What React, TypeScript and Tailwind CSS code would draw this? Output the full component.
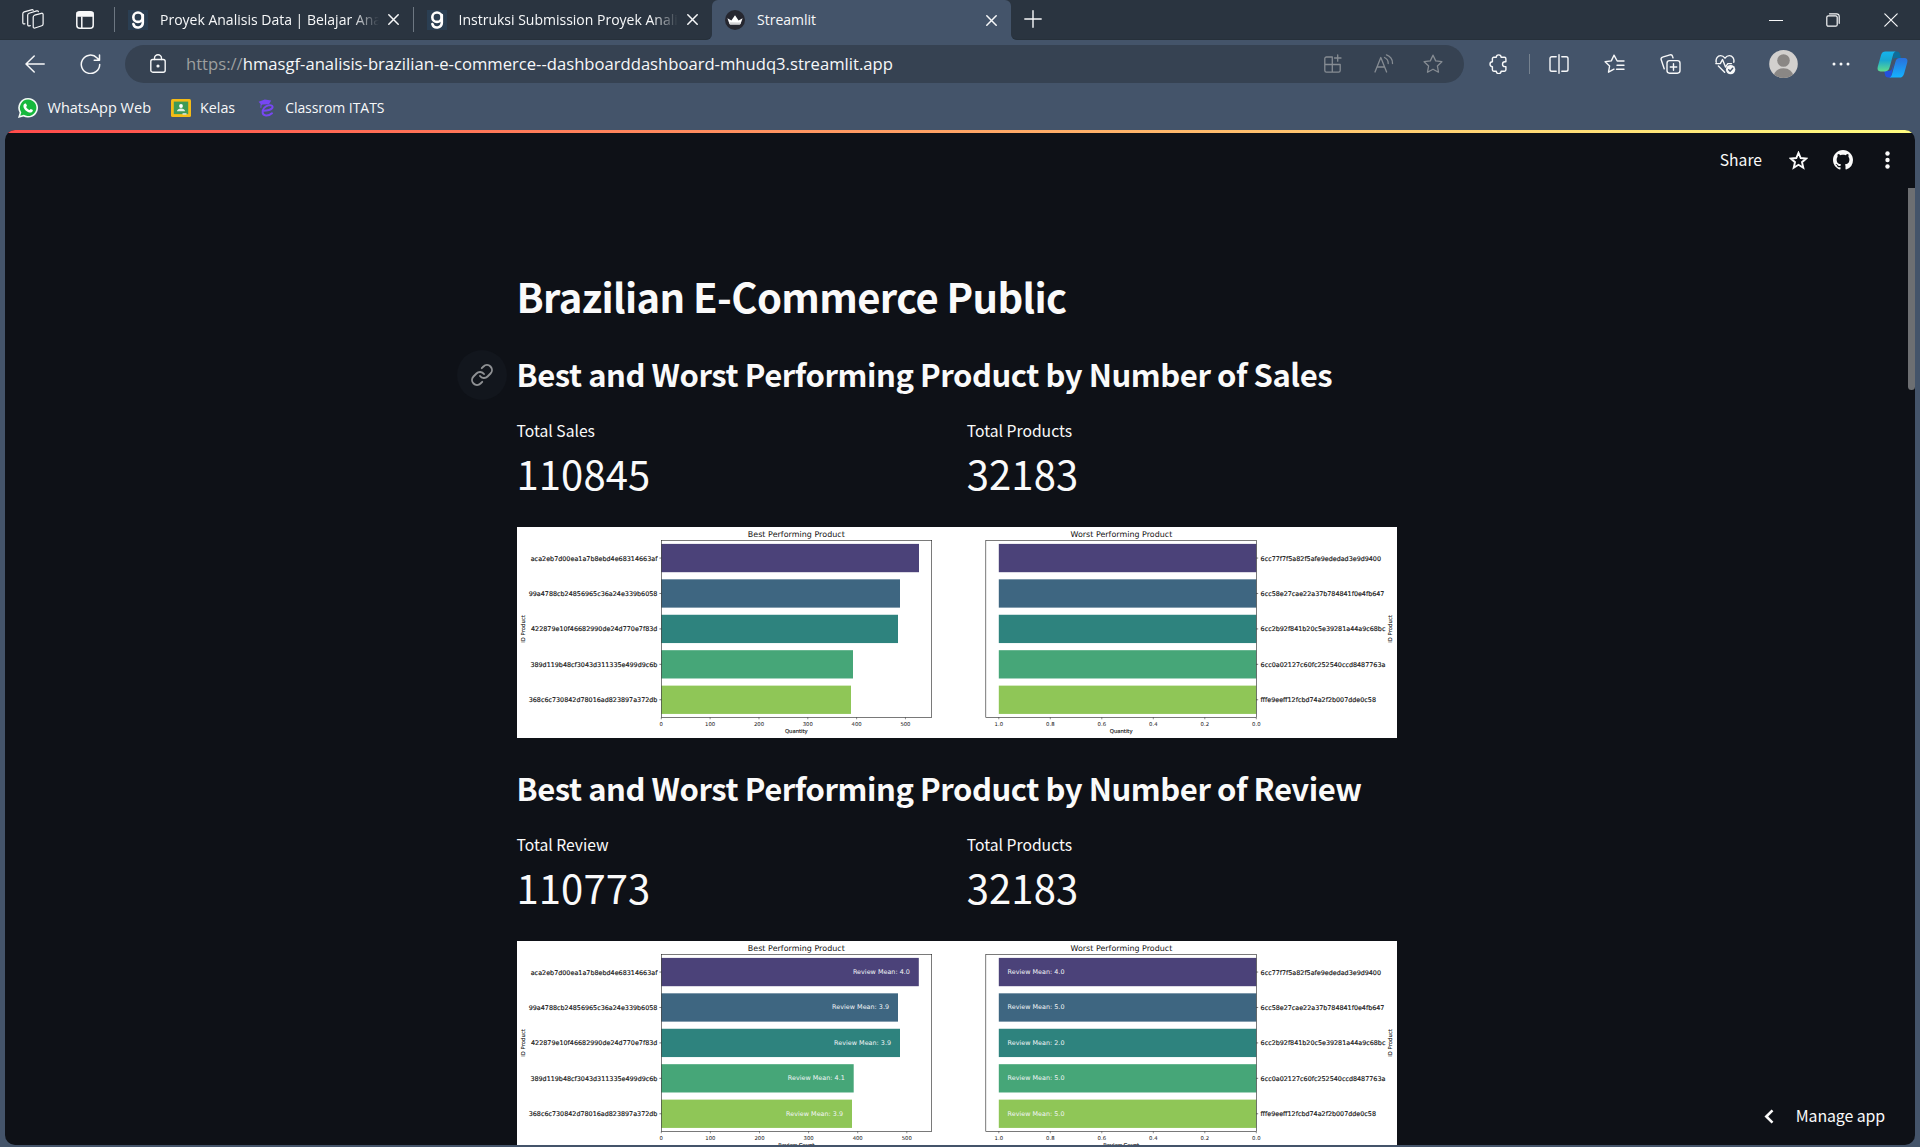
import type { ReactNode } from 'react';

const BAR_COLORS = ['#4b4279', '#3e6681', '#2e837e', '#46a678', '#8fc657'];

const BEST_IDS: [string, number][] = [
  ['aca2eb7d00ea1a7b8ebd4e68314663af', 13.7],
  ['99a4788cb24856965c36a24e339b6058', 11.7],
  ['422879e10f46682990de24d770e7f83d', 14],
  ['389d119b48cf3043d311335e499d9c6b', 13.4],
  ['368c6c730842d78016ad823897a372db', 11.7],
];

const WORST_IDS: [string, number][] = [
  ['6cc77f7f5a82f5afe9ededad3e9d9400', 864],
  ['6cc58e27cae22a37b784841f0e4fb647', 867.4],
  ['6cc2b92f841b20c5e39281a44a9c68bc', 868.4],
  ['6cc0a02127c60fc252540ccd8487763a', 868.4],
  ['fffe9eeff12fcbd74a2f2b007dde0c58', 859],
];

type ChartData = {
  axis: string;
  axisWidth: number;
  bestEnds: number[];
  tickStep: number;
  bestMeans?: string[];
  worstMeans?: string[];
};

const SALES: ChartData = { axis: 'Quantity', axisWidth: 22.7, bestEnds: [402, 383, 381, 336, 334], tickStep: 48.83 };

const REVIEWS: ChartData = {
  axis: 'Review Count',
  axisWidth: 36,
  bestEnds: [401.8, 381, 383, 336.7, 335],
  tickStep: 49.1,
  bestMeans: ['4.0', '3.9', '3.9', '4.1', '3.9'],
  worstMeans: ['4.0', '5.0', '2.0', '5.0', '5.0'],
};

const ROW = 35.43;

function Chart({ data }: { data: ChartData }) {
  return (
    <svg width="880" height="211" viewBox="0 0 880 211" className="block bg-white font-['DejaVu_Sans']" fill="#111">
      <text x="279.3" y="10.2" fontSize="7.95" textAnchor="middle" textLength="97">Best Performing Product</text>
      <text x="604.4" y="10.2" fontSize="7.95" textAnchor="middle" textLength="101.7">Worst Performing Product</text>
      {BAR_COLORS.map((color, i) => {
        const top = 16.9 + ROW * i;
        const mid = top + 14.15;
        const [bestId, bestX] = BEST_IDS[i];
        const [worstId, worstEnd] = WORST_IDS[i];
        return (
          <g key={color}>
            <rect x="144.3" y={top} width={data.bestEnds[i] - 144.3} height="28.3" fill={color} />
            <rect x="481.8" y={top} width="257.5" height="28.3" fill={color} />
            <g stroke="#111" strokeWidth=".15">
              <text x={bestX} y={mid + 2.5} fontSize="6.4" textLength={140.4 - bestX}>{bestId}</text>
              <text x="743.6" y={mid + 2.5} fontSize="6.4" textLength={worstEnd - 743.6}>{worstId}</text>
            </g>
            <path d={`M142.4 ${mid}h1.9M739.3 ${mid}h1.9`} stroke="#222" strokeWidth=".6" />
            {data.bestMeans && (
              <text x={data.bestEnds[i] - 8.9} y={mid + 1.9} fontSize="6.4" fill="#f1f4f6" textAnchor="end" textLength="57">
                Review Mean: {data.bestMeans[i]}
              </text>
            )}
            {data.worstMeans && (
              <text x="490.5" y={mid + 1.9} fontSize="6.4" fill="#f1f4f6" textLength="57">
                Review Mean: {data.worstMeans[i]}
              </text>
            )}
          </g>
        );
      })}
      <rect x="144.3" y="13.3" width="270.4" height="177.1" fill="none" stroke="#222" strokeWidth=".6" />
      <rect x="468.8" y="13.3" width="270.5" height="177.1" fill="none" stroke="#222" strokeWidth=".6" />
      {[0, 100, 200, 300, 400, 500].map((v, i) => (
        <g key={v}>
          <path d={`M${144.3 + i * data.tickStep} 190.4v1.9`} stroke="#222" strokeWidth=".5" />
          <text x={144.3 + i * data.tickStep} y="198.5" fontSize="5.3" textAnchor="middle">{v}</text>
        </g>
      ))}
      {['1.0', '0.8', '0.6', '0.4', '0.2', '0.0'].map((v, i) => (
        <g key={v}>
          <path d={`M${481.8 + i * 51.5} 190.4v1.9`} stroke="#222" strokeWidth=".5" />
          <text x={481.8 + i * 51.5} y="198.5" fontSize="5.3" textAnchor="middle">{v}</text>
        </g>
      ))}
      <g stroke="#111" strokeWidth=".12">
        <text x="279.3" y="205.9" fontSize="5.3" textAnchor="middle" textLength={data.axisWidth}>{data.axis}</text>
        <text x="604.2" y="205.9" fontSize="5.3" textAnchor="middle" textLength={data.axisWidth}>{data.axis}</text>
        <text transform="translate(7.9 102) rotate(-90)" fontSize="5.3" textAnchor="middle" textLength="27.5">ID Product</text>
        <text transform="translate(874.6 102) rotate(-90)" fontSize="5.3" textAnchor="middle" textLength="27.5">ID Product</text>
      </g>
    </svg>
  );
}

function Icon({ w, h, className = '', sw = 1.3, children }: { w: number; h: number; className?: string; sw?: number; children: ReactNode }) {
  return (
    <svg
      width={w}
      height={h}
      viewBox={`0 0 ${w} ${h}`}
      fill="none"
      stroke="currentColor"
      strokeWidth={sw}
      strokeLinecap="round"
      strokeLinejoin="round"
      className={`shrink-0 ${className}`}
    >
      {children}
    </svg>
  );
}

function Close({ className = '' }: { className?: string }) {
  return (
    <Icon w={11} h={11} sw={1.5} className={className}>
      <path d="M.8.8l9.4 9.4M10.2.8L.8 10.2" />
    </Icon>
  );
}

function DicodingIcon() {
  return (
    <svg width="20" height="20" viewBox="0 0 20 20" className="shrink-0">
      <rect width="20" height="20" fill="#2a3e52" />
      <g fill="none" stroke="#fff" strokeWidth="2.6">
        <circle cx="10" cy="7.2" r="4.7" />
        <path d="M14.8 5v7.8a4.8 4.8 0 0 1-9.4 1.3" strokeLinecap="round" />
      </g>
    </svg>
  );
}

function StreamlitIcon() {
  return (
    <svg width="20" height="20" viewBox="0 0 20 20" className="shrink-0">
      <circle cx="10" cy="10" r="10" fill="#262730" />
      <path d="M2.4 8.2l4 2.2L10 5.2l3.6 5.2 4-2.2-2 5.6q-.2.6-.9.6H5.3q-.7 0-.9-.6z" fill="#fff" />
      <path d="M4.500 12.300l11.300.3-.5 1.500q-.2.4-.7.4H5.400q-.5 0-.7-.4z" fill="#d2d2d4" />
    </svg>
  );
}

function Tab({ title, icon }: { title: string; icon: ReactNode }) {
  return (
    <div className="flex h-10 w-[299px] items-center pl-[13px]">
      {icon}
      <span className="ml-3 w-[219px] overflow-hidden text-[14px] leading-5 whitespace-nowrap [mask-image:linear-gradient(to_right,black_88%,transparent)]">
        {title}
      </span>
      <Close className="ml-[9px]" />
    </div>
  );
}

function TabStrip() {
  return (
    <div className="flex h-10">
      <div className="flex w-[712px] shrink-0 items-center rounded-br-md border-b border-[#26303a] bg-[#2a3440]">
        <Icon w={22} h={21} className="ml-[22px]" sw={1.2}>
          <path d="M12.600 6.200l6.800-1.900c1-.3 1.700.2 1.700 1.300v9.300c0 .9-.4 1.500-1.300 1.800l-6.900 2.300c-1 .3-1.700-.2-1.700-1.300V8c0-.9.5-1.500 1.400-1.800z" />
          <path d="M8.300 16.600l-.9.200c-1 .3-1.700-.2-1.700-1.300V6c0-.9.5-1.500 1.400-1.800l7.600-2.300c.8-.2 1.500 0 1.700.7" />
          <path d="M3 14.800l-.5.1c-1 .2-1.700-.3-1.700-1.300V4.700c0-.9.5-1.500 1.400-1.800L9.500.8c.8-.2 1.400 0 1.700.5" />
        </Icon>
        <Icon w={18} h={18} className="ml-[32px]" sw={1.5}>
          <rect x=".8" y=".8" width="16.400" height="16.400" rx="3" />
          <path d="M1.200 1.500h15.600v3.500H1.200z" fill="currentColor" />
          <path d="M5.800 6v10.800" />
        </Icon>
        <div className="ml-5 h-[25px] w-px bg-[#6d7782]" />
        <Tab title="Proyek Analisis Data | Belajar Analisis" icon={<DicodingIcon />} />
        <div className="-ml-px h-[25px] w-px bg-[#6d7782]" />
        <Tab title="Instruksi Submission Proyek Analisis" icon={<DicodingIcon />} />
      </div>
      <div className="w-[299px] shrink-0 [background:linear-gradient(#2a3440_50%,#44546a_50%)]">
        <div className="flex h-10 items-center rounded-t-md bg-[#44546a] pl-[13px]">
          <StreamlitIcon />
          <span className="ml-3 text-[14px] leading-5">Streamlit</span>
          <Close className="mr-[14px] ml-auto" />
        </div>
      </div>
      <div className="flex grow items-center rounded-bl-md border-b border-[#26303a] bg-[#2a3440] pr-[22px] pl-[13px]">
        <Icon w={18} h={18} sw={1.4} className="-mt-px">
          <path d="M9 .8v16.400M.8 9h16.400" />
        </Icon>
        <Icon w={14} h={14} sw={1.2} className="ml-auto">
          <path d="M.5 7.500h13" />
        </Icon>
        <Icon w={14} h={14} sw={1.2} className="ml-[43px]">
          <rect x=".8" y="2.800" width="10.400" height="10.400" rx="1.500" />
          <path d="M3.500.8h7.200a2.500 2.500 0 0 1 2.500 2.500v7" />
        </Icon>
        <Icon w={14} h={14} sw={1.2} className="ml-[44px]">
          <path d="M.8.8l12.400 12.400M13.200.8L.8 13.200" />
        </Icon>
      </div>
    </div>
  );
}

const STAR = 'M10 1.200l2.700 5.700 6.200.8-4.500 4.300 1.100 6.200L10 15.200l-5.500 3 1.100-6.200L1.100 7.700l6.200-.8z';

function Toolbar() {
  return (
    <div className="flex h-12 items-center pr-[12px] pl-[25px]">
      <Icon w={20} h={18} sw={1.5} className="-mt-px">
        <path d="M19.200 9H1M9.200 1L1 9l8.200 8" />
      </Icon>
      <Icon w={21} h={20} sw={1.5} className="ml-[35px]">
        <path d="M19.700 10.500a9.200 9.200 0 1 1-2.600-6.600l2 2.200M19.500 1v5.300h-5.300" />
      </Icon>
      <div className="ml-[24px] flex h-[38px] w-[1339px] shrink-0 items-center rounded-full bg-[#364252] pr-[21px] pl-[25px]">
        <Icon w={16} h={19} sw={1.4} className="-mt-px">
          <rect x=".8" y="5.500" width="14.400" height="12.700" rx="2" />
          <path d="M4.500 5.500V4.300a3.500 3.500 0 0 1 7 0v1.200" />
          <circle cx="8" cy="12" r=".9" fill="currentColor" />
        </Icon>
        <span className="-mt-px ml-[20px] text-[16.640px] leading-6 whitespace-nowrap">
          <span className="text-[#9d9f9f]">https://</span>hmasgf-analisis-brazilian-e-commerce--dashboarddashboard-mhudq3.streamlit.app
        </span>
        <div className="-mt-px ml-auto flex items-center text-[#868c93]">
          <Icon w={18} h={19} sw={1.3}>
            <path d="M8 3H2.500A1.600 1.600 0 0 0 .8 4.600v12A1.600 1.600 0 0 0 2.400 18.200h12.200a1.600 1.600 0 0 0 1.600-1.600V10.500H.8M8.300 3v15.200M13.700.8v6.400M10.500 4h6.500" />
          </Icon>
          <Icon w={20} h={20} sw={1.3} className="ml-[32px]">
            <path d="M1 18L6.800 3.500 12.600 18M3 13h7.600M10.500 3.500a6.500 6.500 0 0 1 3.700 6M12.500.8a9 9 0 0 1 6 8.700" />
          </Icon>
          <Icon w={20} h={20} sw={1.3} className="ml-[29px]">
            <path d={STAR} />
          </Icon>
        </div>
      </div>
      <Icon w={20} h={20} sw={1.4} className="ml-[25px]">
        <path d="M7.300 3.300a2.400 2.400 0 0 1 4.800 0h3.400c.8 0 1.400.6 1.400 1.400v3.100h-1a2.400 2.400 0 0 0 0 4.800h1v3.200c0 .8-.6 1.400-1.400 1.400h-3.400a2.400 2.400 0 0 1-4.800 0H4.800c-.8 0-1.400-.6-1.400-1.400v-3.200a2.400 2.400 0 0 1 0-4.800V4.700c0-.8.6-1.400 1.400-1.400z" />
      </Icon>
      <div className="ml-[20px] h-5 w-px bg-[#76828f]" />
      <Icon w={20} h={20} sw={1.4} className="ml-[19px]">
        <path d="M7.200 2.800H2.800A1.800 1.800 0 0 0 1 4.600v10.800a1.800 1.800 0 0 0 1.800 1.800h4.400M12.800 2.800h4.400A1.800 1.800 0 0 1 19 4.600v10.800a1.800 1.800 0 0 1-1.800 1.800h-4.400M10 .8v18.400" />
      </Icon>
      <Icon w={21} h={20} sw={1.4} className="ml-[35px]">
        <path d="M20 7h-6.800L10 1.200 7.300 6.900l-6.200.8 4.500 4.300-1.100 6.200L10 15.200M13 11.200h7M12.500 15.200H20" />
      </Icon>
      <Icon w={21} h={20} sw={1.4} className="ml-[35px]">
        <rect x="7" y="6.600" width="13" height="12.600" rx="2.600" />
        <path d="M13.500 9.800v6.400M10.300 13h6.400M4.200 14.800L1.200 5.700c-.4-1.200.2-2.200 1.300-2.500L10 .9c1.200-.3 2.200.3 2.500 1.400l.5 1.600" />
      </Icon>
      <Icon w={21} h={21} sw={1.4} className="ml-[34px]">
        <path d="M1.200 8.200C.5 4.800 2.600 1.600 5.600 1.600c2 0 3.400 1.200 4.400 2.600 1-1.400 2.400-2.600 4.400-2.600 3 0 5.100 3.200 4.400 6.600M3.400 12l6.200 6.200M.8 9.600h4.500l2.200-4 3 7.500 2.300-3.500h3.700" />
        <circle cx="15.600" cy="15.600" r="4.700" fill="currentColor" stroke="none" />
        <path d="M13.700 15.800l1.400 1.400 2.600-3" stroke="#44546a" />
      </Icon>
      <svg width="29" height="28" viewBox="0 0 29 28" className="ml-[33px] shrink-0">
        <clipPath id="avatar">
          <ellipse cx="14.500" cy="14" rx="14.300" ry="14" />
        </clipPath>
        <g clipPath="url(#avatar)">
          <rect width="29" height="28" fill="#d2d0ce" />
          <circle cx="14.500" cy="10.500" r="6.300" fill="#8a8785" />
          <ellipse cx="14.500" cy="26.500" rx="10" ry="8.300" fill="#8a8785" />
        </g>
      </svg>
      <svg width="18" height="4" viewBox="0 0 18 4" className="ml-[34px] shrink-0" fill="currentColor">
        <circle cx="2" cy="2" r="1.500" />
        <circle cx="9" cy="2" r="1.500" />
        <circle cx="16" cy="2" r="1.500" />
      </svg>
      <svg width="31" height="27" viewBox="0 0 31 27" className="ml-auto shrink-0">
        <defs>
          <linearGradient id="ribbonGreen" x1="0" y1="0" x2="0" y2="1">
            <stop offset="0" stopColor="#14b4ee" />
            <stop offset=".45" stopColor="#1aa7d0" />
            <stop offset="1" stopColor="#5fdc8c" />
          </linearGradient>
          <linearGradient id="ribbonBlue" x1="0" y1="0" x2="0" y2="1">
            <stop offset="0" stopColor="#2a70dc" />
            <stop offset="1" stopColor="#14b2ff" />
          </linearGradient>
        </defs>
        <path d="M17 .6h3c1.800 0 2.600 1.200 3.100 3l.8 3.400h-5c-2 0-3 1-3.400 2.600z" fill="#0d6d9b" />
        <path d="M14 26.500h-3c-1.700 0-2.600-1-3-2.700L7.200 20h4.500c2 0 3-1 3.500-2.800L17 12z" fill="#2451dc" />
        <path d="M8.500.6H19c-1.500.3-2.300 1.200-2.800 2.800L12.700 16c-.8 2.900-2 4.400-4.600 4.400H3.500C1 20.400.1 18.600.7 16L4 4.200C4.800 1.700 6.300.6 8.500.6z" fill="url(#ribbonGreen)" />
        <path d="M22.500 26.600H12c1.500-.3 2.300-1.200 2.800-2.800l3.500-12.500c.8-2.900 2-4.200 4.600-4.200h4.600c2.500 0 3.400 1.800 2.800 4.200L27 23c-.8 2.500-2.300 3.600-4.500 3.600z" fill="url(#ribbonBlue)" />
      </svg>
    </div>
  );
}

function Bookmarks() {
  return (
    <div className="flex h-[42px] items-center pb-[2px] pl-[18px] text-[14.300px] leading-5">
      <svg width="20" height="20" viewBox="0 0 20 20" className="shrink-0">
        <path d="M10.200 0a9.800 9.800 0 1 1-4.700 18.400L0 20l1.600-5.300A9.800 9.800 0 0 1 10.200 0z" fill="#f4faf5" />
        <path d="M10.200 1.600a8.200 8.200 0 1 1-4.300 15.200l-3.600 1 1-3.400A8.200 8.200 0 0 1 10.200 1.600z" fill="#16b83c" />
        <path d="M7.400 5.400c.5 0 .6.100.8.600l.7 1.600c.2.500-.6 1.100-.8 1.500.7 1.400 1.900 2.400 3.300 3 .4-.1 1-1.200 1.400-1.100l1.700.8c.5.300.4.400.3 1-.2 1.200-1.400 1.800-2.400 1.800-3.200-.1-7-3.700-7-6.700 0-1.100.8-2.500 2-2.500z" fill="#fff" />
      </svg>
      <span className="ml-[9.500px] w-[102.500px] text-[14.500px] whitespace-nowrap">WhatsApp Web</span>
      <svg width="20" height="18" viewBox="0 0 20 18" className="ml-[21px] shrink-0">
        <rect width="20" height="18" rx="1.500" fill="#f4bb16" />
        <rect x="2.800" y="2.600" width="14.400" height="12.500" fill="#3f9a57" />
        <circle cx="10" cy="7" r="1.900" fill="#fff" />
        <path d="M5.900 12.300c0-1.900 2-2.900 4.100-2.900s4.100 1 4.100 2.900z" fill="#e3efe5" />
        <rect x="11.500" y="14.200" width="4" height="1.500" fill="#dfe6df" />
      </svg>
      <span className="ml-[9px]">Kelas</span>
      <svg width="17" height="18" viewBox="0 0 17 18" className="ml-[23px] shrink-0">
        <path d="M.6 2.800L6.800.4l6.400 1.200-2.200 3.600-6.400.3-1 .4-.3 3-.9-.1.200-3.700z" fill="#7747f2" />
        <path d="M4.600 11.700c3.800.2 10-1 10-3.700 0-1.600-2.200-2.100-4.300-1.600-3 .8-5.800 3.600-5.700 6.900.1 4 5.600 4.300 9.400 1" fill="none" stroke="#7747f2" strokeWidth="2" strokeLinecap="round" />
      </svg>
      <span className="ml-[10px] text-[14px] tracking-[-0.06px]">Classrom ITATS</span>
    </div>
  );
}

function Metric({ label, value }: { label: string; value: string }) {
  return (
    <div>
      <div className="text-[15.700px] leading-6">{label}</div>
      <div className="mt-1.5 text-[40px] leading-12 tracking-[0.1px]">{value}</div>
    </div>
  );
}

function Section({ title, label, value, chart, anchor }: { title: string; label: string; value: string; chart: ChartData; anchor?: boolean }) {
  return (
    <section className="relative h-[414px] shrink-0">
      {anchor && (
        <span className="absolute top-[-5px] left-[-60px] flex size-[50px] items-center justify-center rounded-full bg-[#12161d] pr-px text-[#8f9194]">
          <svg width="24" height="24" viewBox="0 0 24 24" fill="none" stroke="currentColor" strokeWidth="1.900" strokeLinecap="round" strokeLinejoin="round">
            <path d="M10 13a5 5 0 0 0 7.540.540l3-3a5 5 0 0 0-7.070-7.070l-1.720 1.710" />
            <path d="M14 11a5 5 0 0 0-7.540-.540l-3 3a5 5 0 0 0 7.070 7.070l1.710-1.710" />
          </svg>
        </span>
      )}
      <h2 className="-ml-[0.500px] text-[31px] leading-[38px] font-bold tracking-[-0.440px] whitespace-nowrap">{title}</h2>
      <div className="mt-[26px] -ml-[0.500px] grid grid-cols-2 gap-5">
        <Metric label={label} value={value} />
        <Metric label="Total Products" value="32183" />
      </div>
      <div className="mt-[30px]">
        <Chart data={chart} />
      </div>
    </section>
  );
}

export default function App() {
  return (
    <div className="flex h-[1147px] w-[1920px] flex-col overflow-hidden bg-[#44546a] font-['Open_Sans',sans-serif] text-[#f7f8f9]">
      <TabStrip />
      <Toolbar />
      <Bookmarks />
      <div className="relative mx-[5px] flex h-[1015px] flex-col overflow-hidden rounded-[10px] bg-[#0e1117] font-['Noto_Sans_CJK_SC',sans-serif] text-[#fafafa]">
        <div className="h-[3px] shrink-0 bg-linear-to-r/srgb from-[#ff4b4b] to-[#fffd80]" />
        <header className="flex h-[54px] shrink-0 items-center justify-end pr-[25px]">
          <span className="mr-[27px] text-[15.700px] leading-6">Share</span>
          <Icon w={19} h={19} sw={1.9} className="mr-[25px]">
            <path d="M9.500 1.800l2.200 5.200 5.500.5-4.200 3.700 1.300 5.500-4.800-2.900-4.800 2.900L6 11.200 1.800 7.500 7.300 7z" strokeLinejoin="miter" />
          </Icon>
          <svg width="20" height="20" viewBox="0 0 16 16" fill="currentColor" className="mr-[32px]">
            <path d="M8 0C3.580 0 0 3.580 0 8c0 3.540 2.290 6.530 5.470 7.590.4.070.550-.170.550-.380 0-.190-.010-.820-.010-1.490-2.010.370-2.530-.490-2.690-.940-.090-.230-.480-.940-.820-1.130-.280-.150-.680-.520-.010-.530.630-.010 1.080.580 1.230.820.720 1.210 1.870.870 2.330.660.070-.520.280-.870.510-1.070-1.780-.200-3.640-.890-3.640-3.950 0-.870.310-1.590.820-2.150-.080-.200-.360-1.020.080-2.120 0 0 .670-.210 2.200.820.640-.180 1.320-.270 2-.270s1.360.090 2 .270c1.530-1.040 2.200-.820 2.200-.820.440 1.100.160 1.920.080 2.120.510.560.820 1.270.820 2.150 0 3.070-1.870 3.750-3.650 3.950.290.250.540.730.540 1.480 0 1.070-.010 1.930-.010 2.200 0 .210.150.460.550.380A8.010 8.010 0 0 0 16 8c0-4.420-3.580-8-8-8z" />
          </svg>
          <svg width="5" height="18" viewBox="0 0 5 18" fill="currentColor">
            <circle cx="2.500" cy="2.500" r="2.200" />
            <circle cx="2.500" cy="9" r="2.200" />
            <circle cx="2.500" cy="15.500" r="2.200" />
          </svg>
        </header>
        <main className="ml-[512px] flex w-[880px] flex-col pt-[85px]">
          <h1 className="mb-[35px] -ml-[0.500px] text-[40px] leading-12 font-bold tracking-[-0.620px] whitespace-nowrap">Brazilian E-Commerce Public</h1>
          <Section title="Best and Worst Performing Product by Number of Sales" label="Total Sales" value="110845" chart={SALES} anchor />
          <Section title="Best and Worst Performing Product by Number of Review" label="Total Review" value="110773" chart={REVIEWS} />
        </main>
        <div className="absolute top-[58px] right-0 h-[202px] w-[7px] rounded-b-full bg-[#6d6f72]" />
        <div className="absolute right-[30px] bottom-[17px] flex items-center gap-[22px]">
          <Icon w={11} h={15} sw={2.6}>
            <path d="M9.500 1.300L3.300 7.500l6.200 6.200" strokeLinecap="butt" strokeLinejoin="miter" />
          </Icon>
          <span className="text-[15.900px] leading-6 tracking-[-0.100px]">Manage app</span>
        </div>
      </div>
    </div>
  );
}
